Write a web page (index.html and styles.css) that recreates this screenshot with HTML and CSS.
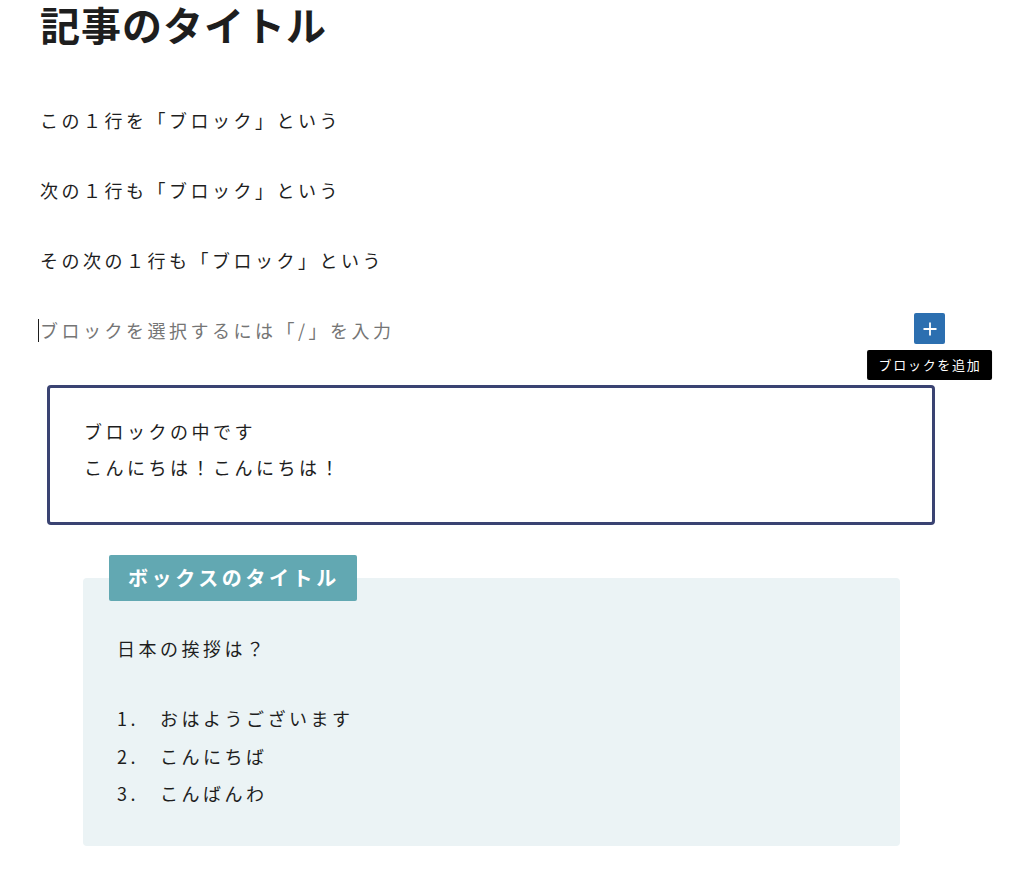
FILE: index.html
```html
<!DOCTYPE html>
<html lang="ja">
<head>
    <meta charset="UTF-8">
    <meta name="viewport" content="width=device-width, initial-scale=1.0">
    <title>記事のタイトル</title>
    <link rel="stylesheet" href="styles.css">
</head>
<body>
    <main class="editor">
        <h1 class="post-title">記事のタイトル</h1>

        <p class="block">この１行を「ブロック」という</p>
        <p class="block">次の１行も「ブロック」という</p>
        <p class="block">その次の１行も「ブロック」という</p>

        <div class="block-appender">
            <p class="placeholder"><span class="caret"></span>ブロックを選択するには「/」を入力</p>
            <div class="inserter">
                <button class="inserter-button" aria-label="ブロックを追加">
                    <svg width="16" height="16" viewBox="0 0 16 16" aria-hidden="true">
                        <path d="M8 1.5v13M1.5 8h13" stroke="#fff" stroke-width="1.8" fill="none"/>
                    </svg>
                </button>
                <span class="tooltip">ブロックを追加</span>
            </div>
        </div>

        <div class="bordered-block">
            <p>ブロックの中です</p>
            <p>こんにちは！こんにちは！</p>
        </div>

        <section class="title-box">
            <h2 class="title-box-label">ボックスのタイトル</h2>
            <div class="title-box-body">
                <p>日本の挨拶は？</p>
                <ol class="greetings">
                    <li><span class="num">1.</span>おはようございます</li>
                    <li><span class="num">2.</span>こんにちば</li>
                    <li><span class="num">3.</span>こんばんわ</li>
                </ol>
            </div>
        </section>
    </main>
</body>
</html>
```

FILE: styles.css
```css
* {
    margin: 0;
    padding: 0;
    box-sizing: border-box;
}

body {
    font-family: "Noto Sans CJK JP", "Noto Sans", sans-serif;
    color: #1e1e1e;
    background-color: #fff;
}

.editor {
    width: 945px;
    padding-left: 40px;
}

.post-title {
    font-size: 40px;
    font-weight: 700;
    line-height: 48px;
    letter-spacing: 1px;
    margin-bottom: 54px;
}

.block {
    font-size: 18px;
    line-height: 36px;
    letter-spacing: 3.5px;
    margin-bottom: 34px;
}

.block-appender {
    display: flex;
    justify-content: space-between;
    align-items: center;
    height: 36px;
    margin-bottom: 37px;
}

.placeholder {
    font-size: 18px;
    line-height: 36px;
    letter-spacing: 3.5px;
    color: #757575;
    display: flex;
    align-items: center;
}

.caret {
    display: inline-block;
    width: 1px;
    height: 23px;
    background-color: #1e1e1e;
    margin-left: -2px;
    margin-right: 1px;
}

.inserter {
    position: relative;
    margin-top: -3px;
}

.inserter-button {
    display: flex;
    align-items: center;
    justify-content: center;
    width: 31px;
    height: 31px;
    border: none;
    border-radius: 2px;
    background-color: #2c6fb0;
    cursor: pointer;
}

.tooltip {
    position: absolute;
    top: 37px;
    left: 50%;
    transform: translateX(-50%);
    white-space: nowrap;
    background-color: #000;
    color: #fff;
    font-size: 13px;
    line-height: 30px;
    letter-spacing: 1.7px;
    padding: 0 11px 0 12px;
    border-radius: 2px;
}

.bordered-block {
    margin-left: 7px;
    width: 888px;
    border: 3px solid #3a4372;
    border-radius: 4px;
    padding: 25px 36px 37px 34px;
    font-size: 18px;
    line-height: 36px;
    letter-spacing: 3.5px;
}

.title-box {
    margin: 30px 0 0 43px;
    width: 817px;
}

.title-box-label {
    position: relative;
    z-index: 1;
    display: inline-block;
    margin-left: 26px;
    height: 46px;
    padding: 0 17px 0 19px;
    background-color: #62a8b2;
    color: #fff;
    font-size: 20px;
    font-weight: 700;
    line-height: 46px;
    letter-spacing: 3.6px;
    border-radius: 2px;
}

.title-box-body {
    margin-top: -23px;
    background-color: #ebf3f5;
    border-radius: 4px;
    padding: 52px 34px 33px;
    font-size: 18px;
    line-height: 36px;
    letter-spacing: 3.5px;
}

.greetings {
    list-style: none;
    margin-top: 34px;
}

.greetings li {
    display: flex;
    line-height: 37.5px;
}

.greetings .num {
    width: 43px;
}
```
